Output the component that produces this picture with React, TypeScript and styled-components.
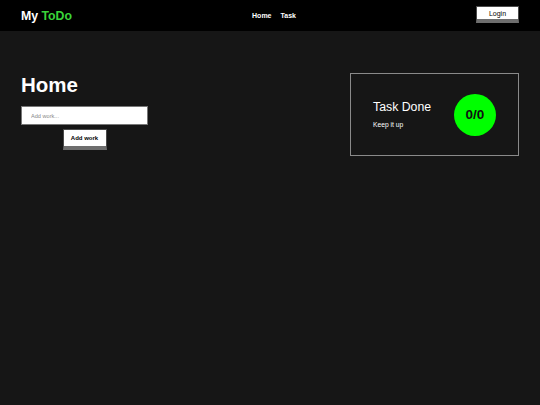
import React from "react";
import styled, { createGlobalStyle } from "styled-components";

const GlobalStyle = createGlobalStyle`
  html, body {
    margin: 0;
    padding: 0;
    background: #161616;
    font-family: "Liberation Sans", Arial, sans-serif;
  }
`;

const Page = styled.div`
  min-height: 405px;
  background: #161616;
`;

const Header = styled.header`
  height: 31px;
  background: #000;
  display: flex;
  align-items: center;
  justify-content: space-between;
  padding: 0 21px;
`;

const Logo = styled.div`
  font-size: 12.3px;
  font-weight: bold;
  color: #fff;
  margin-top: 1px;
  span {
    color: #3ad43a;
  }
`;

const Nav = styled.nav`
  display: flex;
  gap: 9px;
`;

const NavLink = styled.a`
  color: #fff;
  font-size: 7px;
  font-weight: bold;
  text-decoration: none;
`;

const Button = styled.button`
  background: #fff;
  color: #000;
  border: 1px solid #4a4a4a;
  border-bottom: 4px solid #6e6e6e;
  font-family: "Liberation Sans", Arial, sans-serif;
  padding: 0;
  cursor: pointer;
`;

const LoginButton = styled(Button)`
  width: 43px;
  height: 17px;
  font-size: 7px;
  margin-top: -2px;
`;

const Main = styled.main`
  display: flex;
  justify-content: space-between;
  align-items: flex-start;
  padding: 42px 21px;
`;

const Left = styled.section`
  display: flex;
  flex-direction: column;
  align-items: center;
  width: 127px;
`;

const Title = styled.h1`
  align-self: flex-start;
  margin: 0 0 9px;
  color: #fff;
  font-size: 20.5px;
  font-weight: bold;
  line-height: 24px;
`;

const Input = styled.input`
  box-sizing: border-box;
  width: 127px;
  height: 19px;
  border: 1px solid #777;
  padding: 0 9px;
  font-size: 5.6px;
  font-family: "Liberation Sans", Arial, sans-serif;
  outline: none;
  &::placeholder {
    color: #888;
  }
`;

const AddButton = styled(Button)`
  margin-top: 4px;
  width: 44px;
  height: 21px;
  font-size: 6px;
  font-weight: bold;
`;

const Card = styled.section`
  box-sizing: border-box;
  width: 169px;
  height: 83px;
  border: 1px solid #8a8a8a;
  display: flex;
  align-items: center;
  justify-content: space-between;
  padding: 0 22px;
`;

const CardText = styled.div`
  color: #fff;
  margin-top: -2px;
`;

const CardTitle = styled.div`
  font-size: 12.3px;
  line-height: 14px;
  margin-bottom: 7px;
`;

const CardSub = styled.div`
  font-size: 6.7px;
`;

const Counter = styled.div`
  width: 42px;
  height: 42px;
  border-radius: 50%;
  background: #00ff00;
  display: flex;
  align-items: center;
  justify-content: center;
  color: #111;
  font-size: 13.5px;
  font-weight: bold;
`;

export default function App() {
  return (
    <Page>
      <GlobalStyle />
      <Header>
        <Logo>
          My <span>ToDo</span>
        </Logo>
        <Nav>
          <NavLink href="#">Home</NavLink>
          <NavLink href="#">Task</NavLink>
        </Nav>
        <LoginButton>Login</LoginButton>
      </Header>
      <Main>
        <Left>
          <Title>Home</Title>
          <Input placeholder="Add work..." />
          <AddButton>Add work</AddButton>
        </Left>
        <Card>
          <CardText>
            <CardTitle>Task Done</CardTitle>
            <CardSub>Keep it up</CardSub>
          </CardText>
          <Counter>0/0</Counter>
        </Card>
      </Main>
    </Page>
  );
}
